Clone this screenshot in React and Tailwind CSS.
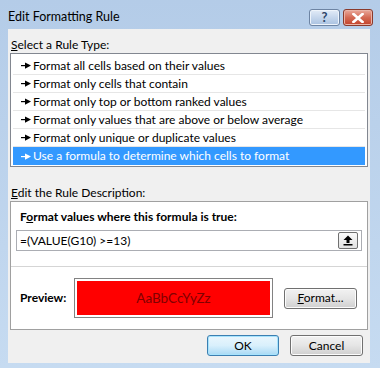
import React from "react";

const F = { fontFamily: 'Lato, "Noto Sans", sans-serif' };

function Arrow({ color }) {
  return (
    <svg width="10" height="7" viewBox="0 0 10 7" className="shrink-0">
      <rect x="0" y="3" width="5" height="1.2" fill={color} />
      <polygon points="4,0.5 10,3.6 4,6.7" fill={color} />
    </svg>
  );
}

function Btn({ children, className = "", primary = false }) {
  return (
    <div
      className={
        "flex items-center justify-center rounded-[3px] border text-[12px] text-black " +
        (primary
          ? "border-[#3c7fb1] bg-gradient-to-b from-[#eaf6fd] via-[#d9f0fc] to-[#a7d9f5] shadow-[inset_0_0_0_1px_#a6e3fd]"
          : "border-[#707070] bg-gradient-to-b from-[#f2f2f2] via-[#e5e5e5] to-[#cfcfcf] shadow-[inset_0_0_0_1px_#fcfcfc]") +
        " " +
        className
      }
      style={F}
    >
      {children}
    </div>
  );
}

const rules = [
  "Format all cells based on their values",
  "Format only cells that contain",
  "Format only top or bottom ranked values",
  "Format only values that are above or below average",
  "Format only unique or duplicate values",
  "Use a formula to determine which cells to format",
];

export default function App() {
  return (
    <div
      className="w-[380px] h-[368px] bg-gradient-to-b from-[#b4cce8] to-[#c6dbf1] flex flex-col overflow-hidden"
      style={F}
    >
      {/* title bar */}
      <div className="h-[29px] flex items-start shrink-0">
        <div className="pl-[8px] pt-[8px] text-[12.5px] text-black leading-[17px]">
          Edit Formatting Rule
        </div>
        <div className="ml-auto mr-[7px] mt-[9px] flex gap-[3px]">
          <div className="w-[31px] h-[17px] rounded-[3px] border border-[#6d84a3] bg-gradient-to-b from-[#e3ecf7] via-[#c5d6ec] to-[#a9c2e1] flex items-center justify-center shadow-[inset_0_0_0_1px_#eef4fb]">
            <span className="text-[13px] leading-none font-bold text-[#2d4668]" style={F}>?</span>
          </div>
          <div className="w-[30px] h-[17px] rounded-[3px] border border-[#8a3a2c] bg-gradient-to-b from-[#e9a99c] via-[#d46a54] to-[#c24129] flex items-center justify-center shadow-[inset_0_0_0_1px_#eab3a6]">
            <svg width="12" height="10" viewBox="0 0 12 10">
              <path d="M1.5 1 L10.5 9 M10.5 1 L1.5 9" stroke="#fff" strokeWidth="2.6" strokeLinecap="square" />
            </svg>
          </div>
        </div>
      </div>

      {/* client area */}
      <div className="ml-[8px] w-[362px] h-[334px] bg-[#f0f0f0] flex flex-col shrink-0">
        <div className="pl-[3px] pt-[8px] h-[24px] text-[12px] leading-[16px] text-black">
          <span className="underline">S</span>elect a Rule Type:
        </div>
        <div className="ml-[2px] w-[358px] h-[114px] border border-[#828790] bg-white px-[2px] pt-[3px]">
          {rules.map((r, i) => {
            const sel = i === rules.length - 1;
            return (
              <div
                key={i}
                className={
                  "h-[18px] flex items-center gap-[2px] pl-[8px] text-[12px] " +
                  (sel ? "bg-[#3399ff] text-white" : "text-black border-b border-[#e6e6e6]")
                }
              >
                <Arrow color={sel ? "#ffffff" : "#000000"} />
                <span className="leading-[16px]">{r}</span>
              </div>
            );
          })}
        </div>

        <div className="pl-[3px] mt-[18px] h-[16px] text-[12px] leading-[16px] text-black">
          <span className="underline">E</span>dit the Rule Description:
        </div>
        <div className="ml-[2px] w-[358px] h-[129px] border border-[#a0a0a0] bg-white flex flex-col">
          <div className="h-[65px] border-b border-[#d5d5d5] flex flex-col">
            <div className="pl-[9px] pt-[7px] h-[28px] text-[12px] font-bold leading-[16px] text-black">
              F<span className="underline">o</span>rmat values where this formula is true:
            </div>
            <div className="mx-[5px] h-[21px] border border-[#abadb3] flex items-center pl-[3px] pr-[3px]">
              <span className="text-[12px] leading-[16px] text-black">=(VALUE(G10) &gt;=13)</span>
              <div className="ml-auto w-[20px] h-[17px] rounded-[2px] border border-[#707070] bg-gradient-to-b from-[#fafafa] to-[#e2e2e2] flex items-center justify-center">
                <svg width="10" height="11" viewBox="0 0 10 11">
                  <polygon points="5,0.5 9.5,5 6.5,5 6.5,8 3.5,8 3.5,5 0.5,5" fill="#000" />
                  <rect x="0.5" y="9" width="9" height="1.5" fill="#000" />
                </svg>
              </div>
            </div>
          </div>
          <div className="flex-1 flex items-center pl-[9px]">
            <div className="w-[54px] text-[12px] font-bold leading-[16px] text-black">Preview:</div>
            <div className="w-[199px] h-[40px] border border-[#828282] bg-white p-[2px]">
              <div className="w-full h-full bg-[#ff0000] flex items-center justify-center">
                <span className="text-[13.5px] text-[#800000]" style={F}>
                  AaBbCcYyZz
                </span>
              </div>
            </div>
            <Btn className="ml-[11px] w-[73px] h-[21px]">
              <span><span className="underline">F</span>ormat...</span>
            </Btn>
          </div>
        </div>

        <div className="flex mt-[5px] gap-[11px] justify-end pr-[7px]">
          <Btn primary className="w-[72px] h-[21px]">OK</Btn>
          <Btn className="w-[73px] h-[21px]">Cancel</Btn>
        </div>
      </div>
    </div>
  );
}
